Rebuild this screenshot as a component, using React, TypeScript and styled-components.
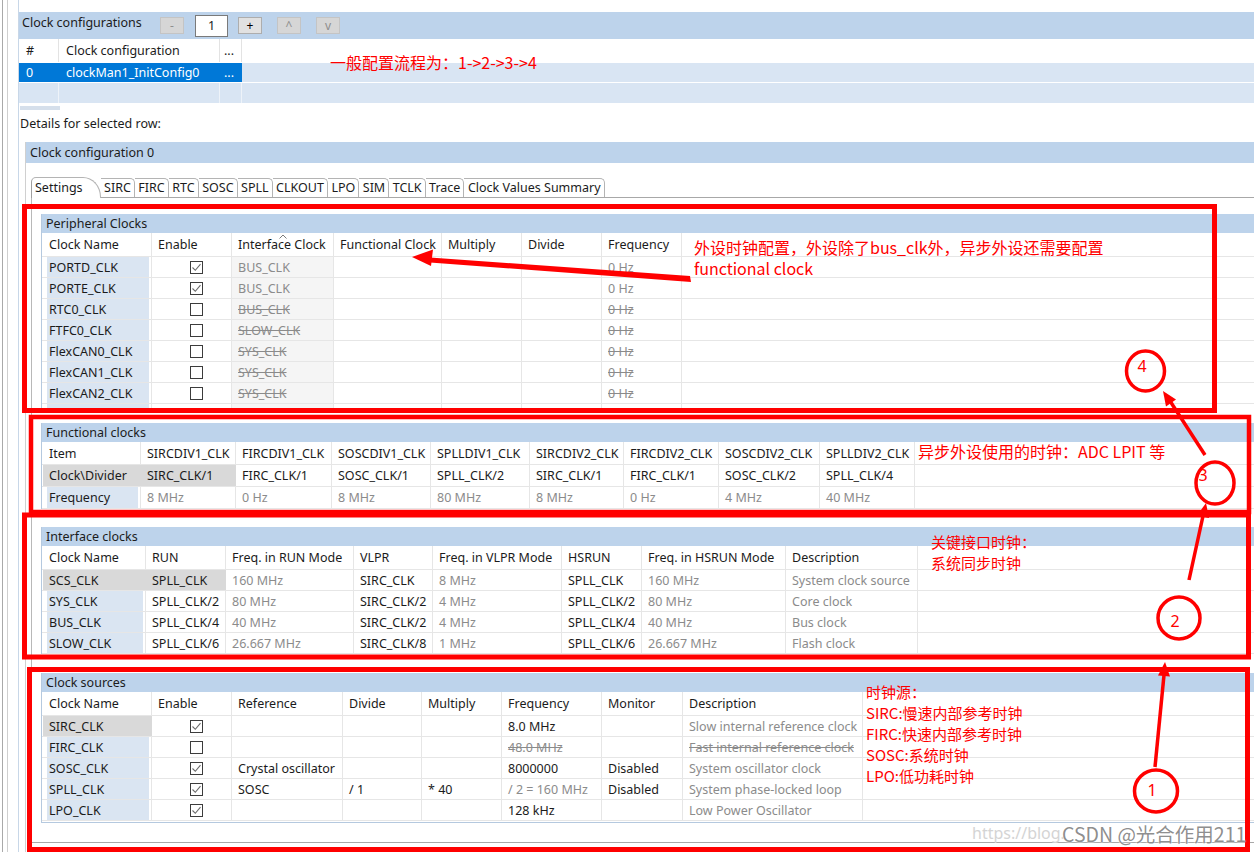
import React from 'react';
import styled, { createGlobalStyle, css } from 'styled-components';

const UI_FONT = `"Noto Sans", "Noto Sans CJK SC", sans-serif`;
const NOTE_FONT = `"Noto Sans CJK SC", "Noto Sans", sans-serif`;

const BAR = '#bdd3eb';
const NAME_BG = '#dae5f2';
const GRAY_CELL = '#d9d9d9';
const GRID_LINE = '#e6e6e6';
const MUTED = '#8b8b8b';
const RED = '#ff0000';

const GlobalStyle = createGlobalStyle`
  html, body { margin: 0; padding: 0; background: #fff; }
  body { font-family: ${UI_FONT}; font-size: 12.5px; color: #1b1b1b; }
  * { box-sizing: border-box; }
`;

const Screen = styled.div`
  position: relative;
  width: 1254px;
  height: 852px;
  overflow: hidden;
  background: #fff;
  display: flex;
`;

const Rail = styled.div`
  flex: none;
  width: 16px;
  margin-left: 2px;
  padding-left: 4px;
  border-left: 1px solid #a9a9a9;
`;

const RailLine = styled.div`
  height: 100%;
  border-left: 1px solid #cfcfcf;
`;

const Content = styled.div`
  flex: 1;
  display: flex;
  flex-direction: column;
  padding-top: 12px;
  border-left: 1px solid #c8d7e8;
  min-width: 0;
`;

/* ---------- top: clock configurations ---------- */

const ConfigBar = styled.div`
  height: 27px;
  display: flex;
  align-items: center;
  padding-left: 3px;
  background: ${BAR};
`;

const BarTitle = styled.div`
  align-self: flex-start;
  width: 138px;
  margin-top: 3px;
  line-height: 16px;
`;

const SmallButton = styled.div<{ $dim?: boolean; $ml?: number }>`
  width: 24px;
  height: 17px;
  margin-left: ${p => p.$ml ?? 0}px;
  border: 1px solid ${p => (p.$dim ? '#c4c4c4' : '#adadad')};
  background: ${p => (p.$dim ? '#d6d6d6' : '#e1e1e1')};
  color: ${p => (p.$dim ? '#8e8e8e' : '#000')};
  font-size: 12px;
  line-height: 15px;
  text-align: center;
`;

const SpinInput = styled.div`
  width: 33px;
  height: 22px;
  margin-left: 11px;
  border: 1px solid #7a7a7a;
  background: #fff;
  line-height: 20px;
  text-align: center;
`;

const ConfRow = styled.div<{ $h: number }>`
  display: grid;
  grid-template-columns: 40px 161px 22px 1fr;
  height: ${p => p.$h}px;
  border-bottom: 1px solid #fff;
`;

const ConfCell = styled.div<{ $sel?: boolean; $fill?: boolean }>`
  display: flex;
  align-items: center;
  padding-left: 7px;
  white-space: nowrap;
  border-right: 1px solid ${p => (p.$fill ? '#eef3f9' : '#e3e3e3')};
  ${p => p.$fill && css`background: #d9e5f3;`}
  ${p => p.$sel && css`background: #0078d7; color: #fff; border-right-color: #0078d7;`}
  &:nth-child(3) { padding-left: 4px; }
  &:last-child { border-right: none; }
`;

const ScrollStub = styled.div`
  width: 40px;
  height: 4px;
  margin: 2px 0 0 1px;
  background: #d5dfeb;
`;

const DetailsLabel = styled.div`
  margin-top: 6px;
  padding-left: 1px;
  line-height: 16px;
`;

/* ---------- details panel ---------- */

const DetailsPanel = styled.div`
  flex: 1;
  display: flex;
  flex-direction: column;
  margin: 10px 0 0 6px;
  border-left: 1px solid #d0d0d0;
`;

const PanelBar = styled.div`
  height: 21px;
  line-height: 21px;
  padding-left: 4px;
  background: ${BAR};
`;

const TabStrip = styled.div`
  display: flex;
  align-items: flex-end;
  height: 20px;
  margin: 14px 0 0 5px;
`;

const Tab = styled.div<{ $active?: boolean }>`
  height: 19px;
  padding: 0 3px 0 3.5px;
  border: 1px solid #b4b4b4;
  border-left: none;
  border-bottom: none;
  border-top-right-radius: 5px;
  line-height: 18px;
  background: #fff;
  white-space: nowrap;
  ${p =>
    p.$active &&
    css`
      position: relative;
      z-index: 1;
      height: 21px;
      margin-bottom: -1px;
      padding: 0 17px 0 3px;
      border-left: 1px solid #a0a0a0;
      border-top-left-radius: 5px;
      border-top-right-radius: 18px 20px;
      line-height: 20px;
    `}
`;

const TabBody = styled.div`
  height: 646px;
  margin-left: 5px;
  padding: 16px 0 0 9px;
  border-top: 1px solid #a8a8a8;
  border-left: 1px solid #b8b8b8;
  border-bottom: 1px solid #a8a8a8;
`;

const Section = styled.div<{ $mt: number; $h?: number; $bottom?: boolean }>`
  margin-top: ${p => p.$mt}px;
  ${p => p.$h && css`height: ${p.$h}px; overflow: hidden;`}
  border-left: 1px solid #b5c9df;
  ${p => p.$bottom && css`border-bottom: 1px solid #b5c9df; padding-bottom: 1px;`}
`;

const SectionBar = styled.div`
  height: 19px;
  line-height: 19px;
  padding-left: 4px;
  background: ${BAR};
`;

const Row = styled.div<{ $cols: string; $h: number }>`
  display: grid;
  grid-template-columns: ${p => p.$cols};
  height: ${p => p.$h}px;
  padding-left: 1px;
  border-bottom: 1px solid ${GRID_LINE};
`;

type Tone = 'name' | 'sel' | 'iface';

const Cell = styled.div<{ $tone?: Tone; $muted?: boolean; $strike?: boolean; $pad?: number }>`
  position: relative;
  display: flex;
  align-items: center;
  padding-left: ${p => p.$pad ?? 6}px;
  border-right: 1px solid ${GRID_LINE};
  white-space: nowrap;
  overflow: hidden;
  color: ${p => (p.$muted ? MUTED : '#1b1b1b')};
  text-decoration: ${p => (p.$strike ? 'line-through' : 'none')};
  ${p => p.$tone === 'name' && css`background: ${NAME_BG}; box-shadow: inset 4px 0 #fff, inset -2px 0 #fff;`}
  ${p => p.$tone === 'sel' && css`background: ${GRAY_CELL}; border-right-color: ${GRAY_CELL};`}
  ${p => p.$tone === 'iface' && css`background: #f5f5f5;`}
  &:last-child { border-right: none; }
`;

const SortCaret = styled.svg`
  position: absolute;
  top: 1px;
  left: 50%;
  transform: translateX(-50%);
`;

const Box = styled.span`
  display: inline-flex;
  width: 13px;
  height: 13px;
  border: 1px solid #3c3c3c;
  background: #fff;
`;

const Check = ({ on }: { on: boolean }) => (
  <Box>
    {on && (
      <svg width="11" height="11" viewBox="0 0 11 11">
        <polyline points="1.5,5.5 4.3,8.3 9.5,2.2" fill="none" stroke="#6a6a6a" strokeWidth="1.1" />
      </svg>
    )}
  </Box>
);

/* ---------- annotations (drawn over the screenshot) ---------- */

const Overlay = styled.svg`
  position: absolute;
  left: 0;
  top: 0;
  pointer-events: none;
`;

const Note = styled.div<{ $x: number; $y: number; $size?: number }>`
  position: absolute;
  left: ${p => p.$x}px;
  top: ${p => p.$y}px;
  font-family: ${NOTE_FONT};
  font-size: ${p => p.$size ?? 16}px;
  line-height: 21px;
  color: ${RED};
  white-space: nowrap;
`;

const NoteLine = styled.div`
  height: 21px;
  line-height: 21px;
`;

const Num = styled.div<{ $x: number; $y: number }>`
  position: absolute;
  left: ${p => p.$x}px;
  top: ${p => p.$y}px;
  transform: translate(-50%, -50%);
  font-family: ${UI_FONT};
  font-size: 16px;
  color: ${RED};
`;

const WaterLink = styled.div`
  position: absolute;
  left: 972px;
  top: 822px;
  font-family: ${UI_FONT};
  font-size: 16px;
  color: #d4d4d4;
  white-space: nowrap;
`;

const WaterMark = styled.div`
  position: absolute;
  left: 1062px;
  top: 819px;
  font-family: ${NOTE_FONT};
  font-size: 19.5px;
  color: rgba(112, 112, 112, 0.8);
  text-shadow: 0 0 2px #fff, 0 0 1px #fff;
  white-space: nowrap;
`;

/* ---------- data ---------- */

const P_COLS = '109px 80px 102px 108px 80px 80px 80px 1fr';
const F_COLS = '98px 95px 96px 99px 99px 94px 95px 101px 95px 1fr';
const I_COLS = '103px 80px 128px 79px 129px 80px 144px 132px 1fr';
const S_COLS = '109px 80px 111px 79px 80px 100px 81px 180px 1fr';

const peripherals: [string, boolean, string][] = [
  ['PORTD_CLK', true, 'BUS_CLK'],
  ['PORTE_CLK', true, 'BUS_CLK'],
  ['RTC0_CLK', false, 'BUS_CLK'],
  ['FTFC0_CLK', false, 'SLOW_CLK'],
  ['FlexCAN0_CLK', false, 'SYS_CLK'],
  ['FlexCAN1_CLK', false, 'SYS_CLK'],
  ['FlexCAN2_CLK', false, 'SYS_CLK'],
];

const funcHead = ['Item', 'SIRCDIV1_CLK', 'FIRCDIV1_CLK', 'SOSCDIV1_CLK', 'SPLLDIV1_CLK', 'SIRCDIV2_CLK', 'FIRCDIV2_CLK', 'SOSCDIV2_CLK', 'SPLLDIV2_CLK'];
const funcDiv = ['SIRC_CLK/1', 'FIRC_CLK/1', 'SOSC_CLK/1', 'SPLL_CLK/2', 'SIRC_CLK/1', 'FIRC_CLK/1', 'SOSC_CLK/2', 'SPLL_CLK/4'];
const funcFreq = ['8 MHz', '0 Hz', '8 MHz', '80 MHz', '8 MHz', '0 Hz', '4 MHz', '40 MHz'];

const ifaceHead = ['Clock Name', 'RUN', 'Freq. in RUN Mode', 'VLPR', 'Freq. in VLPR Mode', 'HSRUN', 'Freq. in HSRUN Mode', 'Description'];
const ifaceRows = [
  ['SCS_CLK', 'SPLL_CLK', '160 MHz', 'SIRC_CLK', '8 MHz', 'SPLL_CLK', '160 MHz', 'System clock source'],
  ['SYS_CLK', 'SPLL_CLK/2', '80 MHz', 'SIRC_CLK/2', '4 MHz', 'SPLL_CLK/2', '80 MHz', 'Core clock'],
  ['BUS_CLK', 'SPLL_CLK/4', '40 MHz', 'SIRC_CLK/2', '4 MHz', 'SPLL_CLK/4', '40 MHz', 'Bus clock'],
  ['SLOW_CLK', 'SPLL_CLK/6', '26.667 MHz', 'SIRC_CLK/8', '1 MHz', 'SPLL_CLK/6', '26.667 MHz', 'Flash clock'],
];

type Source = {
  name: string;
  on: boolean;
  ref: string;
  div: string;
  mul: string;
  freq: string;
  freqMuted?: boolean;
  mon: string;
  desc: string;
};

const sources: Source[] = [
  { name: 'SIRC_CLK', on: true, ref: '', div: '', mul: '', freq: '8.0 MHz', mon: '', desc: 'Slow internal reference clock' },
  { name: 'FIRC_CLK', on: false, ref: '', div: '', mul: '', freq: '48.0 MHz', freqMuted: true, mon: '', desc: 'Fast internal reference clock' },
  { name: 'SOSC_CLK', on: true, ref: 'Crystal oscillator', div: '', mul: '', freq: '8000000', mon: 'Disabled', desc: 'System oscillator clock' },
  { name: 'SPLL_CLK', on: true, ref: 'SOSC', div: '/ 1', mul: '* 40', freq: '/ 2 = 160 MHz', freqMuted: true, mon: 'Disabled', desc: 'System phase-locked loop' },
  { name: 'LPO_CLK', on: true, ref: '', div: '', mul: '', freq: '128 kHz', mon: '', desc: 'Low Power Oscillator' },
];

const tabs = ['Settings', 'SIRC', 'FIRC', 'RTC', 'SOSC', 'SPLL', 'CLKOUT', 'LPO', 'SIM', 'TCLK', 'Trace', 'Clock Values Summary'];

const PeripheralTable = () => (
  <Section $mt={0} $h={197}>
    <SectionBar>Peripheral Clocks</SectionBar>
    <Row $cols={P_COLS} $h={24}>
      <Cell>Clock Name</Cell>
      <Cell>Enable</Cell>
      <Cell>
        <SortCaret width="8" height="5" viewBox="0 0 8 5">
          <polyline points="0.5,4.5 4,1 7.5,4.5" fill="none" stroke="#7a7a7a" strokeWidth="1" />
        </SortCaret>
        Interface Clock
      </Cell>
      <Cell>Functional Clock</Cell>
      <Cell>Multiply</Cell>
      <Cell>Divide</Cell>
      <Cell>Frequency</Cell>
      <Cell />
    </Row>
    {peripherals.map(([name, on, iface]) => {
      const off = name !== 'PORTD_CLK' && name !== 'PORTE_CLK';
      return (
        <Row $cols={P_COLS} $h={21} key={name}>
          <Cell $tone="name">{name}</Cell>
          <Cell $pad={38}>
            <Check on={on} />
          </Cell>
          <Cell $tone="iface" $muted $strike={off}>
            {iface}
          </Cell>
          <Cell />
          <Cell />
          <Cell />
          <Cell $muted $strike={off}>
            0 Hz
          </Cell>
          <Cell />
        </Row>
      );
    })}
    <Row $cols={P_COLS} $h={21}>
      <Cell $tone="name" />
      <Cell />
      <Cell $tone="iface" />
      <Cell />
      <Cell />
      <Cell />
      <Cell />
      <Cell />
    </Row>
  </Section>
);

const FunctionalTable = () => (
  <Section $mt={12}>
    <SectionBar>Functional clocks</SectionBar>
    <Row $cols={F_COLS} $h={23}>
      {funcHead.map(h => (
        <Cell key={h}>{h}</Cell>
      ))}
      <Cell />
    </Row>
    <Row $cols={F_COLS} $h={22}>
      <Cell $tone="sel">Clock\Divider</Cell>
      {funcDiv.map((d, i) => (
        <Cell key={i} $tone={i === 0 ? 'sel' : undefined}>
          {d}
        </Cell>
      ))}
      <Cell />
    </Row>
    <Row $cols={F_COLS} $h={22}>
      <Cell $tone="name">Frequency</Cell>
      {funcFreq.map((f, i) => (
        <Cell key={i} $muted>
          {f}
        </Cell>
      ))}
      <Cell />
    </Row>
  </Section>
);

const InterfaceTable = () => (
  <Section $mt={18}>
    <SectionBar>Interface clocks</SectionBar>
    <Row $cols={I_COLS} $h={24}>
      {ifaceHead.map(h => (
        <Cell key={h}>{h}</Cell>
      ))}
      <Cell />
    </Row>
    {ifaceRows.map((r, ri) => (
      <Row $cols={I_COLS} $h={21} key={r[0]}>
        {r.map((v, i) => {
          const tone: Tone | undefined = ri === 0 ? (i < 2 ? 'sel' : undefined) : i === 0 ? 'name' : undefined;
          const muted = i === 2 || i === 4 || i === 6 || i === 7;
          return (
            <Cell key={i} $tone={tone} $muted={muted}>
              {v}
            </Cell>
          );
        })}
        <Cell />
      </Row>
    ))}
  </Section>
);

const SourcesTable = () => (
  <Section $mt={19} $bottom>
    <SectionBar>Clock sources</SectionBar>
    <Row $cols={S_COLS} $h={24}>
      {['Clock Name', 'Enable', 'Reference', 'Divide', 'Multiply', 'Frequency', 'Monitor', 'Description'].map(h => (
        <Cell key={h}>{h}</Cell>
      ))}
      <Cell />
    </Row>
    {sources.map((s, i) => (
      <Row $cols={S_COLS} $h={21} key={s.name}>
        <Cell $tone={i === 0 ? 'sel' : 'name'}>{s.name}</Cell>
        <Cell $pad={38}>
          <Check on={s.on} />
        </Cell>
        <Cell>{s.ref}</Cell>
        <Cell>{s.div}</Cell>
        <Cell>{s.mul}</Cell>
        <Cell $muted={s.freqMuted} $strike={!s.on}>
          {s.freq}
        </Cell>
        <Cell>{s.mon}</Cell>
        <Cell $muted $strike={!s.on}>
          {s.desc}
        </Cell>
        <Cell />
      </Row>
    ))}
  </Section>
);

const Annotations = () => (
  <>
    <Overlay width="1254" height="852" viewBox="0 0 1254 852">
      <g fill="none" stroke={RED}>
        <rect x="24.5" y="206.5" width="1190" height="204" strokeWidth="5" />
        <rect x="31" y="417" width="1218" height="95" strokeWidth="4.5" />
        <rect x="24.5" y="515" width="1224" height="142" strokeWidth="5" />
        <rect x="29.5" y="669.5" width="1218" height="180" strokeWidth="5" />
        <ellipse cx="1145.5" cy="371" rx="19" ry="20" strokeWidth="3.5" />
        <ellipse cx="1215" cy="483" rx="19" ry="21" strokeWidth="3.5" />
        <ellipse cx="1179" cy="618" rx="21" ry="21" strokeWidth="3.5" />
        <ellipse cx="1156" cy="791" rx="21.5" ry="21" strokeWidth="3.5" />
        <line x1="1205" y1="455" x2="1170" y2="401" strokeWidth="3.5" />
        <line x1="1189" y1="580" x2="1203" y2="516" strokeWidth="3.5" />
        <line x1="1155" y1="767" x2="1164" y2="675" strokeWidth="3.5" />
      </g>
      <g fill={RED}>
        <polygon points="690,276 691,282 430,262.5 430,257.5" />
        <polygon points="412,257 433,249.5 431,266" />
        <polygon points="1163,391 1176,399.5 1166,406.5" />
        <polygon points="1206,503 1209,518 1197,515.5" />
        <polygon points="1165,662 1170,676.5 1158,675.5" />
      </g>
    </Overlay>
    <Note $x={330} $y={52}>一般配置流程为：1-&gt;2-&gt;3-&gt;4</Note>
    <Note $x={694} $y={237}>
      <NoteLine>外设时钟配置，外设除了bus_clk外，异步外设还需要配置</NoteLine>
      <NoteLine>functional clock</NoteLine>
    </Note>
    <Note $x={918} $y={441}>异步外设使用的时钟：ADC LPIT 等</Note>
    <Note $x={931} $y={531} $size={15}>
      <NoteLine>关键接口时钟：</NoteLine>
      <NoteLine>系统同步时钟</NoteLine>
    </Note>
    <Note $x={866} $y={681} $size={15}>
      <NoteLine>时钟源：</NoteLine>
      <NoteLine>SIRC:慢速内部参考时钟</NoteLine>
      <NoteLine>FIRC:快速内部参考时钟</NoteLine>
      <NoteLine>SOSC:系统时钟</NoteLine>
      <NoteLine>LPO:低功耗时钟</NoteLine>
    </Note>
    <Num $x={1142} $y={366}>4</Num>
    <Num $x={1203} $y={475}>3</Num>
    <Num $x={1175} $y={621}>2</Num>
    <Num $x={1152} $y={790}>1</Num>
    <WaterLink>https://blog.</WaterLink>
    <WaterMark>CSDN @光合作用211</WaterMark>
  </>
);

export default function App() {
  return (
    <Screen>
      <GlobalStyle />
      <Rail>
        <RailLine />
      </Rail>
      <Content>
        <ConfigBar>
          <BarTitle>Clock configurations</BarTitle>
          <SmallButton $dim>-</SmallButton>
          <SpinInput>1</SpinInput>
          <SmallButton $ml={10}>+</SmallButton>
          <SmallButton $dim $ml={15}>
            ^
          </SmallButton>
          <SmallButton $dim $ml={15}>
            v
          </SmallButton>
        </ConfigBar>
        <ConfRow $h={24}>
          <ConfCell>#</ConfCell>
          <ConfCell>Clock configuration</ConfCell>
          <ConfCell>...</ConfCell>
          <ConfCell />
        </ConfRow>
        <ConfRow $h={20}>
          <ConfCell $sel>0</ConfCell>
          <ConfCell $sel>clockMan1_InitConfig0</ConfCell>
          <ConfCell $sel>...</ConfCell>
          <ConfCell $fill />
        </ConfRow>
        <ConfRow $h={21}>
          <ConfCell $fill />
          <ConfCell $fill />
          <ConfCell $fill />
          <ConfCell $fill />
        </ConfRow>
        <ScrollStub />
        <DetailsLabel>Details for selected row:</DetailsLabel>
        <DetailsPanel>
          <PanelBar>Clock configuration 0</PanelBar>
          <TabStrip>
            {tabs.map((t, i) => (
              <Tab key={t} $active={i === 0}>
                {t}
              </Tab>
            ))}
          </TabStrip>
          <TabBody>
            <PeripheralTable />
            <FunctionalTable />
            <InterfaceTable />
            <SourcesTable />
          </TabBody>
        </DetailsPanel>
      </Content>
      <Annotations />
    </Screen>
  );
}
